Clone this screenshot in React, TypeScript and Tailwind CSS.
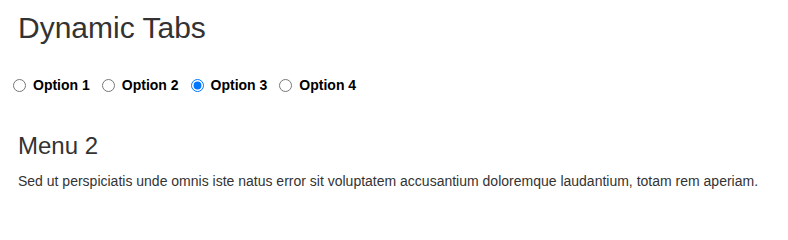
import { useState } from 'react'

const options = ['Option 1', 'Option 2', 'Option 3', 'Option 4']

export default function App() {
  const [active, setActive] = useState(2)

  return (
    <div className="min-h-[218px] bg-white text-[#333] font-['Liberation_Sans',Arial,sans-serif]">
      <h2 className="ml-[18px] pt-[11px] text-[30px] leading-[33px] font-normal">Dynamic Tabs</h2>

      {/* radio tabs */}
      <div className="mt-[31px] ml-[13px] flex h-[20px] items-center">
        {options.map((label, i) => (
          <label key={label} className="mr-[12px] flex items-center gap-[7px] cursor-pointer">
            <input
              type="radio"
              name="tabs"
              checked={active === i}
              onChange={() => setActive(i)}
              className="m-0 h-[13px] w-[13px]"
            />
            <span className="text-[14px] font-bold text-black leading-[20px]">{label}</span>
          </label>
        ))}
      </div>

      <div className="ml-[18px]">
        <h3 className="mt-[38px] text-[24px] leading-[26px] font-normal">Menu {active}</h3>
        <p className="mt-[12px] text-[14px] leading-[20px]">
          Sed ut perspiciatis unde omnis iste natus error sit voluptatem accusantium doloremque laudantium, totam rem aperiam.
        </p>
      </div>
    </div>
  )
}
